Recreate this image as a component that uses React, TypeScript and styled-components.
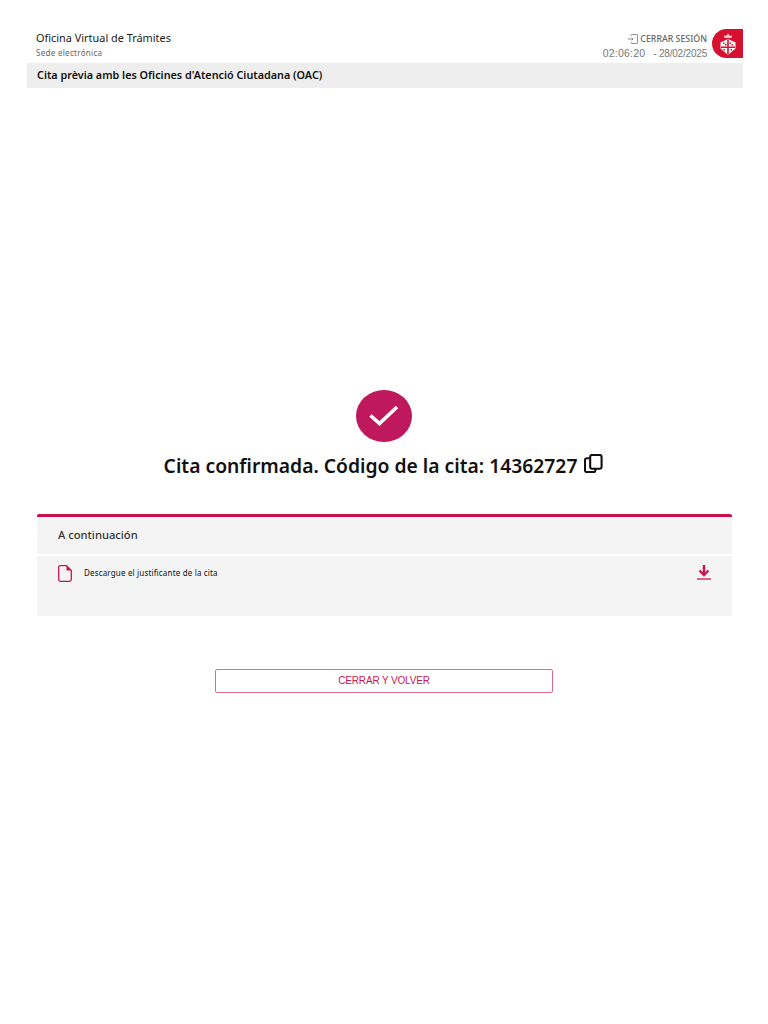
import React from 'react';
import styled, { createGlobalStyle } from 'styled-components';

const GlobalStyle = createGlobalStyle`
  html, body {
    margin: 0;
    padding: 0;
    background: #fff;
    font-family: "Noto Sans", "Liberation Sans", sans-serif;
  }
`;

const App: React.FC = () => {
  return (
    <>
      <GlobalStyle />
      <Page>
        <Header>
          <Brand>
            <BrandTitle>Oficina Virtual de Trámites</BrandTitle>
            <BrandSub>Sede electrónica</BrandSub>
          </Brand>
          <Session>
            <SessionInfo>
              <Logout>
                <svg width="10" height="10" viewBox="0 0 11 11" fill="none" stroke="#777" strokeWidth="0.9">
                  <path d="M3.5 2V1.2A.7.7 0 0 1 4.2.5h5.6a.7.7 0 0 1 .7.7v8.600a.7.7 0 0 1-.7.7H4.200a.7.7 0 0 1-.7-.7V9" />
                  <path d="M0 5.500h5.500M4 4l1.500 1.500L4 7" />
                </svg>
                CERRAR SESIÓN
              </Logout>
              <Clock>
                <Time>02:06:20</Time>
                <DateText>- 28/02/2025</DateText>
              </Clock>
            </SessionInfo>
            <Logo>
              <svg width="20" height="24" viewBox="0 0 20 24">
                <path d="M6.500 6 5.800 3.200 8 4l2-2.500L12 4l2.200-.8L13.500 6z" fill="#f6c9cf" />
                <path d="M10 7 17.500 10.500V16.500L10 23 2.500 16.500V10.500z" fill="#fff" />
                <path d="M9.200 7.500h1.600V22.500H9.200zM3 14.500h14v1.500H3z" fill="#d5112f" />
                <path d="M5 10.500h1.500V12H5zM7 12h1.500v1.500H7zM11.500 10.500H13V12h-1.500zM13.500 12H15v1.500h-1.500zM5.500 17H7v1.500H5.500zM12.500 17H14v1.500h-1.500z" fill="#d5112f" />
              </svg>
            </Logo>
          </Session>
        </Header>
        <TitleBar>Cita prèvia amb les Oficines d'Atenció Ciutadana (OAC)</TitleBar>

        <Confirmation>
          <CheckCircle>
            <svg width="30" height="22" viewBox="0 0 30 22" fill="none" stroke="#fff" strokeWidth="3.600">
              <path d="M1.500 10.500 10.500 18.500 28 2" />
            </svg>
          </CheckCircle>
          <Heading>
            Cita confirmada. Código de la cita: 14362727
            <svg width="19" height="19" viewBox="0 0 20 20" fill="none" stroke="#111" strokeWidth="2.200">
              <rect x="6.500" y="1" width="12" height="14.500" rx="2" />
              <path d="M6 4.500H3A2 2 0 0 0 1 6.500V17a2 2 0 0 0 2 2h7a2 2 0 0 0 2-2v-1.500" />
            </svg>
          </Heading>
        </Confirmation>

        <Card>
          <CardHead>A continuación</CardHead>
          <CardBody>
            <FileRow>
              <FileLabel>
                <svg width="14" height="17" viewBox="0 0 14 17" fill="none" stroke="#c8174f" strokeWidth="1.300">
                  <path d="M2 .7h6.500L13.300 5.500V14.500a1.800 1.800 0 0 1-1.800 1.800H2.500A1.800 1.800 0 0 1 .7 14.500V2A1.300 1.300 0 0 1 2 .7z" />
                  <path d="M8.500.7 13.300 5.500H8.500z" fill="#c8174f" stroke="none" />
                </svg>
                <FileText>Descargue el justificante de la cita</FileText>
              </FileLabel>
              <svg width="14" height="15" viewBox="0 0 14 15" fill="none" stroke="#c8174f">
                <path d="M7 0v9.500" strokeWidth="2.400" />
                <path d="M2.500 5.500 7 10 11.500 5.500" strokeWidth="2.400" />
                <path d="M0 14h14" strokeWidth="1.600" opacity="0.8" />
              </svg>
            </FileRow>
          </CardBody>
        </Card>

        <Actions>
          <CloseButton type="button">CERRAR Y VOLVER</CloseButton>
        </Actions>
      </Page>
    </>
  );
};

const Page = styled.div`
  width: 768px;
  height: 1024px;
  box-sizing: border-box;
  padding: 28px 25px 0 27px;
  background: #fff;
`;

const Header = styled.header`
  display: flex;
  justify-content: space-between;
  align-items: flex-start;
  height: 35px;
`;

const Brand = styled.div`
  padding: 2px 0 0 9px;
`;

const BrandTitle = styled.div`
  font-size: 10.900px;
  line-height: 15px;
  color: #222;
`;

const BrandSub = styled.div`
  margin-top: 2px;
  font-size: 8px;
  line-height: 11px;
  letter-spacing: 0.300px;
  color: #666;
`;

const Session = styled.div`
  display: flex;
  align-items: flex-start;
  gap: 5px;
`;

const SessionInfo = styled.div`
  display: flex;
  flex-direction: column;
  align-items: flex-end;
  padding-top: 5px;
`;

const Logout = styled.div`
  display: flex;
  align-items: center;
  gap: 2px;
  font-size: 8.800px;
  line-height: 13px;
  font-weight: 500;
  color: #666;

  svg {
    margin-top: -1px;
  }
`;

const Clock = styled.div`
  display: flex;
  gap: 8px;
  align-items: baseline;
  margin-top: 1px;
  font-family: "Liberation Sans", Arial, sans-serif;
  color: #777;
  line-height: 13px;
`;

const Time = styled.span`
  font-size: 10.500px;
  letter-spacing: 0.200px;
`;

const DateText = styled.span`
  font-size: 10px;
  letter-spacing: -0.200px;
`;

const Logo = styled.div`
  display: flex;
  align-items: center;
  justify-content: center;
  width: 31px;
  height: 29px;
  margin-top: 1px;
  border-radius: 15px 0 0 15px;
  background: #d5112f;
`;

const TitleBar = styled.div`
  box-sizing: border-box;
  height: 25px;
  padding-left: 10px;
  background: #eeeeee;
  font-size: 10.800px;
  line-height: 24px;
  font-weight: 600;
  color: #111;
`;

const Confirmation = styled.section`
  display: flex;
  flex-direction: column;
  align-items: center;
  margin: 302px 2px 0 0;
`;

const CheckCircle = styled.div`
  display: flex;
  align-items: center;
  justify-content: center;
  width: 56px;
  height: 52px;
  border-radius: 50%;
  background: #c0185c;
`;

const Heading = styled.h1`
  display: flex;
  align-items: center;
  gap: 6px;
  margin: 10px 0 0;
  padding-right: 2px;
  font-size: 19.300px;
  line-height: 28px;
  font-weight: 600;
  color: #111;

  svg {
    margin: -5px -1px 0 1px;
  }
`;

const Card = styled.section`
  margin: 34px 11px 0 10px;
  border-top: 3px solid #c8104f;
  border-radius: 2px 2px 0 0;
`;

const CardHead = styled.div`
  box-sizing: border-box;
  height: 37px;
  padding-left: 21px;
  background: #f4f4f4;
  font-size: 11.200px;
  line-height: 36px;
  font-weight: 500;
  color: #333;
`;

const CardBody = styled.div`
  box-sizing: border-box;
  height: 60px;
  margin-top: 2px;
  padding: 9px 21px;
  background: #f4f4f4;
`;

const FileRow = styled.div`
  display: flex;
  justify-content: space-between;
  align-items: flex-start;
`;

const FileLabel = styled.div`
  display: flex;
  align-items: center;
  gap: 12px;
`;

const FileText = styled.span`
  font-size: 8px;
  line-height: 16px;
  letter-spacing: 0.170px;
  color: #111;
  margin-top: -1px;
`;

const Actions = styled.div`
  display: flex;
  justify-content: center;
  margin-top: 53px;
  padding-right: 2px;
`;

const CloseButton = styled.button`
  width: 338px;
  height: 24px;
  padding: 0 0 2px;
  background: #fff;
  border: 1px solid #e06a95;
  border-radius: 2px;
  font-family: "Liberation Sans", Arial, sans-serif;
  font-size: 10px;
  letter-spacing: -0.150px;
  color: #c8174f;
`;

export default App;
